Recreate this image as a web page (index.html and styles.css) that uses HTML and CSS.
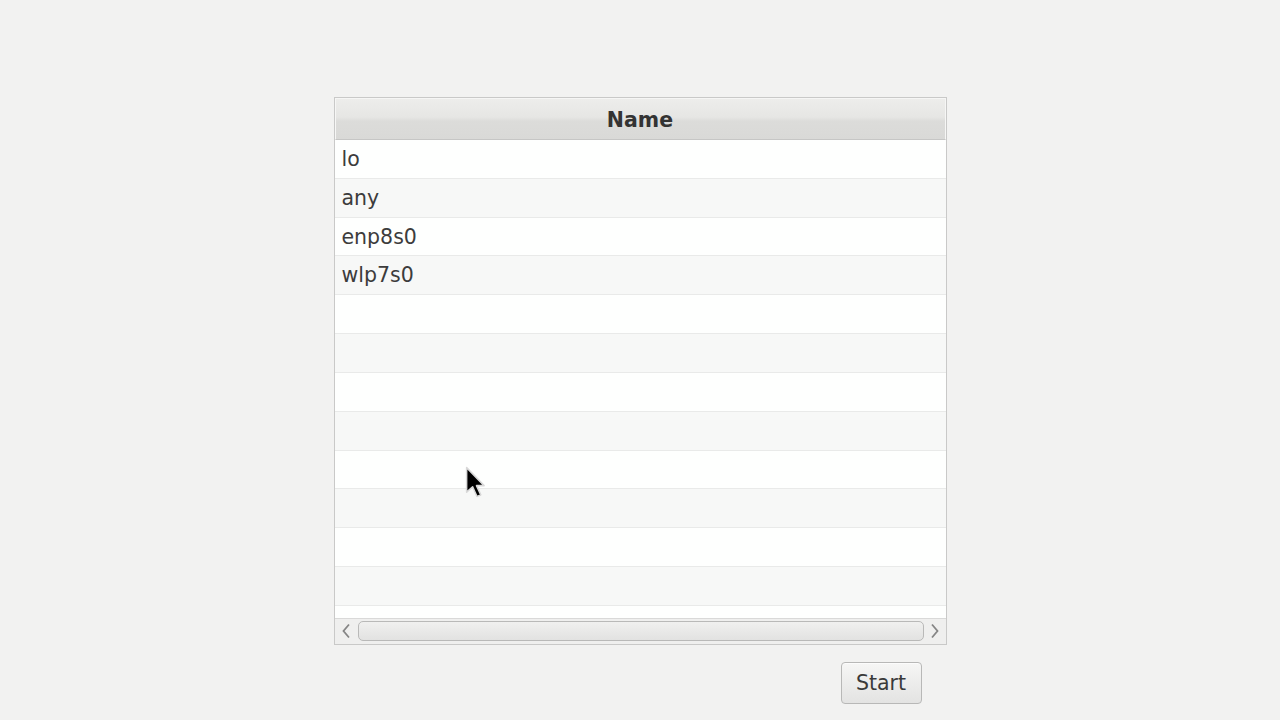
FILE: index.html
```html
<!DOCTYPE html>
<html>
<head>
<meta charset="utf-8">
<link rel="stylesheet" href="styles.css">
</head>
<body>
<div class="page">
  <div class="table">
    <div class="header">Name</div>
    <div class="body">
      <div class="row">lo</div>
      <div class="row odd">any</div>
      <div class="row">enp8s0</div>
      <div class="row odd">wlp7s0</div>
      <div class="row"></div>
      <div class="row odd"></div>
      <div class="row"></div>
      <div class="row odd"></div>
      <div class="row"></div>
      <div class="row odd"></div>
      <div class="row"></div>
      <div class="row odd"></div>
      <div class="row last"></div>
    </div>
    <div class="hscroll">
      <div class="arrow left">
        <svg width="10" height="16" viewBox="0 0 10 16"><path d="M8 1.5 L2.5 8 L8 14.5" fill="none" stroke="#858585" stroke-width="1.8"/></svg>
      </div>
      <div class="thumb"></div>
      <div class="arrow right">
        <svg width="10" height="16" viewBox="0 0 10 16"><path d="M2 1.5 L7.5 8 L2 14.5" fill="none" stroke="#858585" stroke-width="1.8"/></svg>
      </div>
    </div>
  </div>
  <div class="actions">
    <button class="btn">Start</button>
  </div>
</div>
<svg class="cursor" width="24" height="36" viewBox="0 0 22 33">
  <path d="M1.5 1.5 L1.5 24 L7 19 L11 28 L14.5 26.5 L10.5 18 L17.5 18 Z" fill="#000" stroke="#d8d8d8" stroke-width="1.4" stroke-linejoin="round"/>
</svg>
</body>
</html>
```
FILE: styles.css
```css
html, body {
  margin: 0;
  padding: 0;
  background: #f2f2f1;
  font-family: "DejaVu Sans", "Liberation Sans", sans-serif;
  color: #3a3a3a;
}
.page {
  width: 1280px;
  height: 720px;
  display: flex;
  flex-direction: column;
  align-items: center;
  padding-top: 97px;
  box-sizing: border-box;
}
.table {
  width: 613px;
  border: 1px solid #c9c9c8;
  box-sizing: border-box;
  background: #fefffe;
  display: flex;
  flex-direction: column;
}
.header {
  height: 42px;
  box-sizing: border-box;
  border: 1px solid #f6f6f5;
  border-bottom: 1px solid #c6c6c5;
  background: linear-gradient(#ededeb 0%, #e6e6e4 45%, #dcdcda 55%, #d9d9d7 100%);
  font-weight: bold;
  font-size: 20.5px;
  padding-top: 2px;
  display: flex;
  align-items: center;
  justify-content: center;
  color: #333;
}
.body {
  display: flex;
  flex-direction: column;
}
.row {
  height: 38.83px;
  box-sizing: border-box;
  border-bottom: 1px solid #e9eae9;
  background: #fefffe;
  font-size: 20.5px;
  padding-left: 7px;
  display: flex;
  align-items: center;
  color: #3c3c3c;
}
.row.odd {
  background: #f7f8f7;
}
.row.last {
  height: 12px;
  border-bottom: none;
}
.hscroll {
  height: 26px;
  border-top: 1px solid #d9d9d8;
  background: #efefee;
  display: flex;
  align-items: center;
  box-sizing: border-box;
}
.arrow {
  display: flex;
  align-items: center;
  justify-content: center;
}
.arrow.left {
  width: 23px;
}
.arrow.right {
  width: 22px;
}
.thumb {
  flex: 1;
  height: 20px;
  box-sizing: border-box;
  border: 1px solid #b9b9b8;
  border-radius: 5px;
  background: linear-gradient(#f0f0ef, #e2e2e1);
}
.actions {
  width: 613px;
  display: flex;
  justify-content: flex-end;
  padding-right: 25px;
  box-sizing: border-box;
  margin-top: 17px;
}
.btn {
  width: 81px;
  height: 42px;
  border: 1px solid #b8b8b7;
  border-radius: 4px;
  background: linear-gradient(#f6f6f5, #e3e3e2);
  font-family: "DejaVu Sans", sans-serif;
  font-size: 20.5px;
  color: #3a3a3a;
  padding: 0;
  box-shadow: inset 0 1px 0 #fcfcfc;
}
.cursor {
  position: absolute;
  left: 465px;
  top: 466px;
}
```
